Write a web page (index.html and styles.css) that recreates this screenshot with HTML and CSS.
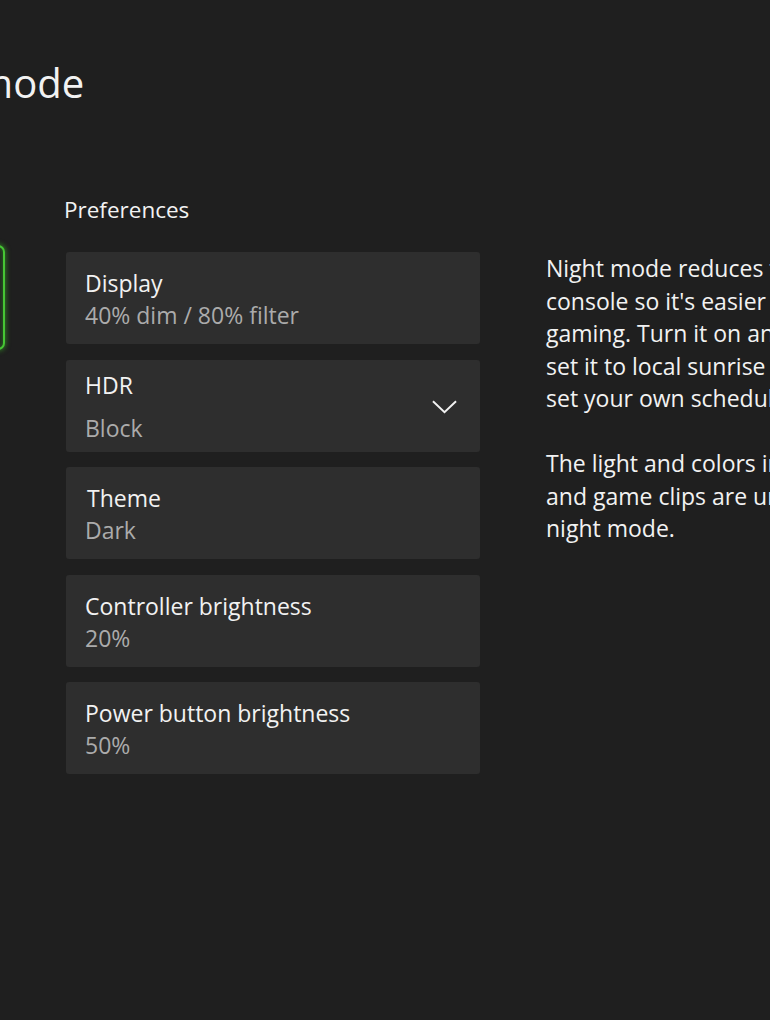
FILE: index.html
```html
<!DOCTYPE html>
<html lang="en">
<head>
    <meta charset="UTF-8">
    <meta name="viewport" content="width=device-width, initial-scale=1.0">
    <title>Night mode</title>
    <link rel="stylesheet" href="styles.css">
</head>
<body>
    <div class="page">
        <h1 class="title">Night mode</h1>

        <div class="main">
            <div class="nav">
                <div class="nav-item focused"></div>
            </div>

            <div class="prefs">
                <h2 class="prefs-heading">Preferences</h2>

                <div class="card">
                    <div class="card-title">Display</div>
                    <div class="card-value">40% dim / 80% filter</div>
                </div>

                <div class="card card-select">
                    <div class="card-text">
                        <div class="card-title">HDR</div>
                        <div class="card-value">Block</div>
                    </div>
                    <svg class="chevron" width="26" height="14" viewBox="0 0 26 14">
                        <polyline points="1,1 13,12.5 25,1" fill="none" stroke="#f2f2f2" stroke-width="2"/>
                    </svg>
                </div>

                <div class="card card-theme">
                    <div class="card-title">Theme</div>
                    <div class="card-value">Dark</div>
                </div>

                <div class="card">
                    <div class="card-title">Controller brightness</div>
                    <div class="card-value">20%</div>
                </div>

                <div class="card">
                    <div class="card-title">Power button brightness</div>
                    <div class="card-value">50%</div>
                </div>
            </div>

            <div class="description">
                <p>Night mode reduces the brightness of your<br>
                console so it's easier on the eyes when<br>
                gaming. Turn it on and off manually,<br>
                set it to local sunrise and sunset, or<br>
                set your own schedule.</p>
                <p>The light and colors in screenshots<br>
                and game clips are unaffected by<br>
                night mode.</p>
            </div>
        </div>
    </div>
</body>
</html>
```

FILE: styles.css
```css
* {
    margin: 0;
    padding: 0;
    box-sizing: border-box;
}

html, body {
    height: 100%;
}

body {
    background-color: #1f1f1f;
    color: #f2f2f2;
    font-family: "Open Sans", "Noto Sans", sans-serif;
    overflow: hidden;
}

.page {
    width: 770px;
    height: 1020px;
    overflow: hidden;
}

.title {
    font-size: 40px;
    font-weight: 400;
    line-height: 50px;
    margin-top: 58px;
    margin-left: -135px;
    white-space: nowrap;
}

.main {
    display: flex;
    margin-top: 87px;
    margin-left: -200px;
}

.nav {
    width: 205px;
    flex-shrink: 0;
    padding-top: 50px;
}

.nav-item {
    height: 105px;
    border-radius: 7px;
}

.nav-item.focused {
    background-color: #212a20;
    border: 2px solid #46c634;
    box-shadow: 0 0 5px 1px rgba(60, 190, 40, 0.55), inset 0 0 4px rgba(60, 190, 40, 0.45);
}

.prefs {
    width: 414px;
    margin-left: 61px;
    flex-shrink: 0;
    display: flex;
    flex-direction: column;
    gap: 15.5px;
}

.prefs-heading {
    font-size: 22.5px;
    font-weight: 400;
    line-height: 30px;
    margin-left: -2px;
    margin-bottom: 11.5px;
}

.card {
    background-color: #2e2e2e;
    border-radius: 3px;
    height: 92px;
    padding: 16px 19px 0;
    display: flex;
    flex-direction: column;
    gap: 2px;
}

.card-title {
    font-size: 23px;
    line-height: 30px;
    color: #f2f2f2;
}

.card-value {
    font-size: 23px;
    line-height: 30px;
    color: #ababab;
}

.card-select {
    flex-direction: row;
    align-items: center;
    justify-content: space-between;
    padding: 10px 23px 9px 19px;
}

.card-select .card-text {
    height: 100%;
    display: flex;
    flex-direction: column;
    justify-content: space-between;
}

.chevron {
    width: 25px;
    height: 14px;
    margin-top: 1px;
}

.card-theme .card-title {
    margin-left: 2px;
}

.description {
    margin-left: 66px;
    padding-top: 57px;
    flex-shrink: 0;
    white-space: nowrap;
    font-size: 23px;
    line-height: 32.5px;
}

.description p + p {
    margin-top: 32.5px;
}
```
